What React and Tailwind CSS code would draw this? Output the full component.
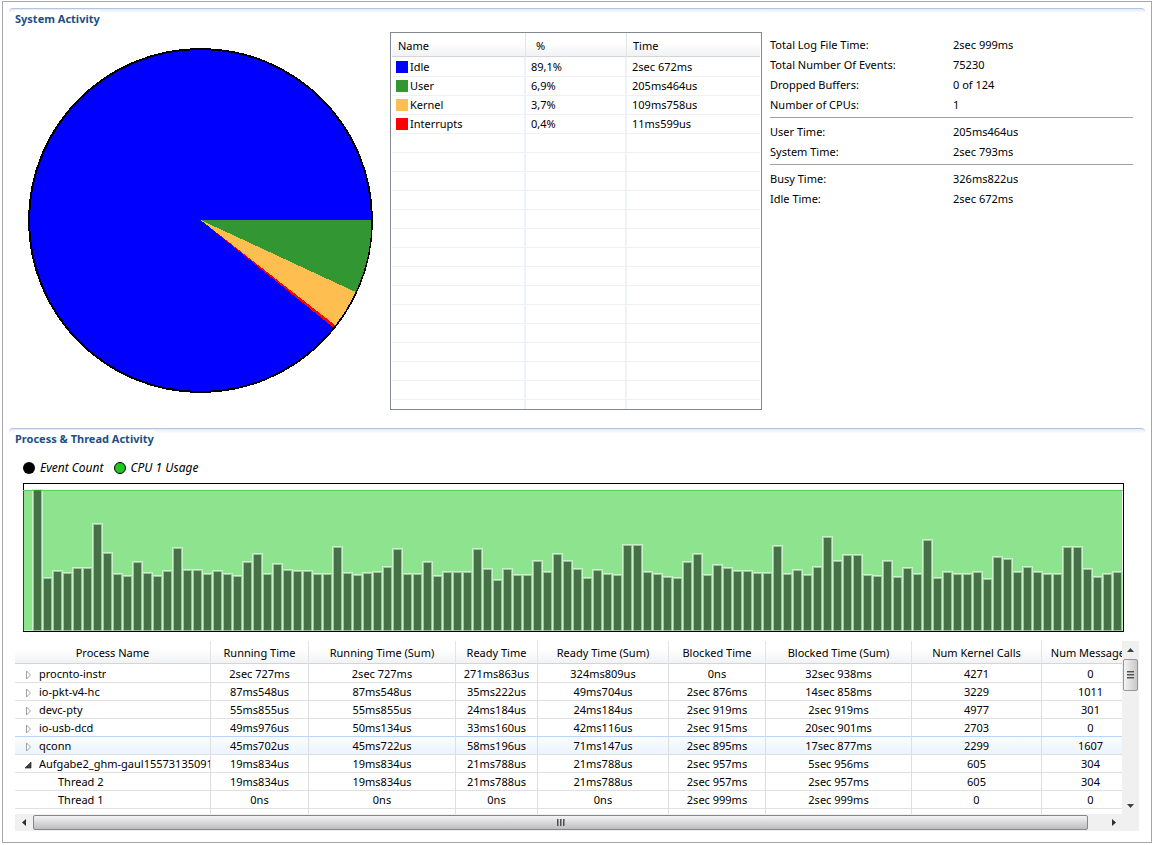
import React from "react";

const slices = [
  { name: "Idle", pct: "89,1%", time: "2sec 672ms", swatch: "bg-[#0000ff]" },
  { name: "User", pct: "6,9%", time: "205ms464us", swatch: "bg-[#329632]" },
  { name: "Kernel", pct: "3,7%", time: "109ms758us", swatch: "bg-[#ffbe50]" },
  { name: "Interrupts", pct: "0,4%", time: "11ms599us", swatch: "bg-[#ff0000]" },
];

const stats = [
  [
    ["Total Log File Time:", "2sec 999ms"],
    ["Total Number Of Events:", "75230"],
    ["Dropped Buffers:", "0 of 124"],
    ["Number of CPUs:", "1"],
  ],
  [
    ["User Time:", "205ms464us"],
    ["System Time:", "2sec 793ms"],
  ],
  [
    ["Busy Time:", "326ms822us"],
    ["Idle Time:", "2sec 672ms"],
  ],
];

const eventCounts = [
  142, 54, 61, 59, 64, 64, 108, 79, 58, 56, 70, 59, 56, 61, 84, 62, 62, 58, 61, 58, 56, 70, 78, 58, 68, 62, 61,
  61, 58, 58, 85, 59, 57, 59, 60, 65, 83, 58, 58, 70, 56, 60, 60, 60, 83, 63, 52, 63, 57, 57, 71, 60, 78, 71, 63, 54, 62,
  58, 57, 87, 87, 60, 58, 55, 54, 70, 78, 57, 67, 64, 61, 61, 59, 59, 86, 58, 62, 57, 65, 95, 71, 77, 77, 57, 56, 71, 55,
  64, 58, 92, 54, 60, 58, 58, 60, 53, 75, 73, 60, 65, 60, 58, 58, 85, 85, 63, 55, 58, 60,
];

const columns = [
  ["Process Name", "w-[196px]"],
  ["Running Time", "w-[98px]"],
  ["Running Time (Sum)", "w-[147px]"],
  ["Ready Time", "w-[82px]"],
  ["Ready Time (Sum)", "w-[131px]"],
  ["Blocked Time", "w-[97px]"],
  ["Blocked Time (Sum)", "w-[146px]"],
  ["Num Kernel Calls", "w-[130px]"],
  ["Num Messages", "w-[98px]"],
];

const processes = [
  { kind: "closed", cells: ["procnto-instr", "2sec 727ms", "2sec 727ms", "271ms863us", "324ms809us", "0ns", "32sec 938ms", "4271", "0"] },
  { kind: "closed", cells: ["io-pkt-v4-hc", "87ms548us", "87ms548us", "35ms222us", "49ms704us", "2sec 876ms", "14sec 858ms", "3229", "1011"] },
  { kind: "closed", cells: ["devc-pty", "55ms855us", "55ms855us", "24ms184us", "24ms184us", "2sec 919ms", "2sec 919ms", "4977", "301"] },
  { kind: "closed", cells: ["io-usb-dcd", "49ms976us", "50ms134us", "33ms160us", "42ms116us", "2sec 915ms", "20sec 901ms", "2703", "0"] },
  { kind: "closed", hot: true, cells: ["qconn", "45ms702us", "45ms722us", "58ms196us", "71ms147us", "2sec 895ms", "17sec 877ms", "2299", "1607"] },
  { kind: "open", cells: ["Aufgabe2_ghm-gaul15573135091", "19ms834us", "19ms834us", "21ms788us", "21ms788us", "2sec 957ms", "5sec 956ms", "605", "304"] },
  { kind: "leaf", cells: ["Thread 2", "19ms834us", "19ms834us", "21ms788us", "21ms788us", "2sec 957ms", "2sec 957ms", "605", "304"] },
  { kind: "leaf", cells: ["Thread 1", "0ns", "0ns", "0ns", "0ns", "2sec 999ms", "2sec 999ms", "0", "0"] },
  { kind: "closed", cells: ["io-usb", "1ms583us", "1ms583us", "0ns", "0ns", "2sec 997ms", "17sec 983ms", "38", "0"] },
];

function SectionTitle({ children }) {
  return (
    <div className="h-[22px] rounded-t-sm border-t border-[#b3c5de] bg-linear-to-b from-[#e3ebf5] to-white to-20% px-[6px]">
      <h2 className="mt-px inline-block bg-white align-top text-[11px] leading-[18px] font-bold text-[#1d4f84]">{children}</h2>
    </div>
  );
}

function point(deg, r) {
  const a = (deg * Math.PI) / 180;
  return `${(172.5 + r * Math.cos(a)).toFixed(2)} ${(172 + r * Math.sin(a)).toFixed(2)}`;
}

function wedge(from, to) {
  return `M172.5 172 L${point(from, 171)} A171 171 0 0 1 ${point(to, 171)} Z`;
}

function Pie() {
  return (
    <svg viewBox="0 0 345 345" className="ml-[19px] mt-[18px] size-[345px] shrink-0" shapeRendering="crispEdges" role="img" aria-label="System activity">
      <circle cx="172.5" cy="172.5" r="172.5" fill="#000" />
      <circle cx="172.5" cy="172.5" r="170.5" fill="#0000ff" />
      <path d={wedge(0, 24.9)} fill="#329632" />
      <path d={wedge(24.9, 38)} fill="#ffbe50" />
      <path d={wedge(38, 39)} fill="#ff0000" />
    </svg>
  );
}

function SummaryTable() {
  const rows = [...slices, ...Array.from({ length: 15 }, () => null)];
  const head = "border-b border-b-[#d5d5d5] bg-linear-to-b from-white from-40% to-[#f1f2f4] pt-[2px] pb-0 font-normal";
  const cell = "border-b border-b-[#f0f0f0] py-px pr-0 align-bottom";
  const line = "border-r-2 border-r-[#edf2f9]";
  return (
    <div className="h-[378px] w-[372px] shrink-0 overflow-hidden border border-[#828790] px-px">
      <table className="w-full table-fixed border-separate border-spacing-0 text-left leading-[16px]">
        <thead>
          <tr className="h-[24px]">
            <th className={`w-[134px] border-r border-r-[#e2e4e8] px-[6px] ${head}`}>Name</th>
            <th className={`w-[101px] border-r border-r-[#e2e4e8] px-[10px] ${head}`}>%</th>
            <th className={`px-[6px] ${head}`}>Time</th>
          </tr>
        </thead>
        <tbody>
          {rows.map((r, i) => (
            <tr key={i} className={i === 0 ? "h-[20px]" : "h-[19px]"}>
              <td className={`pl-[4px] ${cell} ${line}`}>
                {r && (
                  <span className="flex items-center gap-[2px]">
                    <span className={`size-[12px] ${r.swatch}`} />
                    {r.name}
                  </span>
                )}
              </td>
              <td className={`pl-[5px] ${cell} ${line}`}>{r && r.pct}</td>
              <td className={`pl-[5px] ${cell}`}>{r && r.time}</td>
            </tr>
          ))}
        </tbody>
      </table>
    </div>
  );
}

function Stats() {
  return (
    <div className="mr-[12px] flex-1 pt-[3px]">
      {stats.map((group, g) => (
        <dl key={g} className={`grid grid-cols-[183px_1fr] leading-[20px] ${g > 0 ? "mt-[2px] border-t border-[#a0a0a0] pt-[4px]" : ""}`}>
          {group.map(([label, value]) => (
            <React.Fragment key={label}>
              <dt>{label}</dt>
              <dd>{value}</dd>
            </React.Fragment>
          ))}
        </dl>
      ))}
    </div>
  );
}

function Chart() {
  return (
    <svg viewBox="0 0 1101 149" preserveAspectRatio="none" className="block h-[149px] w-full" shapeRendering="crispEdges" role="img" aria-label="Event count and CPU usage">
      <rect width="1101" height="149" fill="#000" />
      <rect x="1" y="1" width="1099" height="147" fill="#fff" />
      <rect x="0" y="7" width="1099" height="141" fill="#8ee48e" />
      <rect x="0" y="7" width="1" height="141" fill="#0f5a0f" />
      {eventCounts.map((h, i) => {
        const x = 9 + i * 10;
        const y = 148 - h;
        return (
          <g key={i}>
            <rect x={x} y={y} width="11" height={h} fill="#c8f2c8" />
            <rect x={x + 1} y={y + 1} width="9" height={h - 1} fill="#a0bea0" />
            <rect x={x + 2} y={y + 2} width="7" height={h - 3} fill="#467146" />
          </g>
        );
      })}
      <rect x="0" y="7" width="1100" height="1" fill="#55cf55" />
      <rect x="11" y="7" width="7" height="1" fill="#3c943c" />
      <rect x="1" y="147" width="8" height="1" fill="#c8f2c8" />
      <rect x="1100" y="0" width="1" height="149" fill="#000" />
    </svg>
  );
}

function Twisty({ kind }) {
  if (kind === "leaf") return <span className="w-[9px] shrink-0" />;
  return (
    <svg viewBox="0 0 9 10" className="mt-[4px] h-[10px] w-[9px] shrink-0">
      {kind === "closed" ? (
        <path d="M2.5 1 L6.5 5 L2.5 9 Z" fill="#fff" stroke="#a0a0a0" />
      ) : (
        <path d="M7 2 V8 H1 Z" fill="#404040" stroke="#262626" strokeWidth="0.7" />
      )}
    </svg>
  );
}

function ProcessTable() {
  return (
    <div className="h-[173px] min-w-0 flex-1 overflow-hidden">
      <table className="w-[1125px] table-fixed border-separate border-spacing-0 text-center leading-[16px]">
        <thead>
          <tr className="h-[23px]">
            {columns.map(([label, width]) => (
              <th key={label} className={`${width} border-r border-b border-r-[#e2e4e8] border-b-[#d5d5d5] bg-linear-to-b from-white from-40% to-[#f1f2f4] px-0 pt-[2px] pb-0 font-normal whitespace-nowrap`}>
                {label}
              </th>
            ))}
          </tr>
        </thead>
        <tbody>
          {processes.map((p, i) => (
            <tr key={i} className={`${i === 0 ? "h-[19px]" : "h-[18px]"} ${p.hot ? "bg-linear-to-b from-[#fafcff] to-[#ebf3fd]" : ""}`}>
              {p.cells.map((c, j) => (
                <td key={j} className={`overflow-hidden border-r border-b border-r-[#dedede] px-0 pt-px pb-0 align-bottom whitespace-nowrap ${processes[i + 1]?.hot ? "border-b-[#b8d6fb]" : "border-b-[#e0e0e0]"}`}>
                  {j === 0 ? (
                    <span className="flex gap-[6px] pl-[9px] text-left">
                      <Twisty kind={p.kind} />
                      <span className={`min-w-0 overflow-hidden ${p.kind === "leaf" ? "pl-[19px]" : ""}`}>{c}</span>
                    </span>
                  ) : (
                    c
                  )}
                </td>
              ))}
            </tr>
          ))}
        </tbody>
      </table>
    </div>
  );
}

function Grip({ vertical }) {
  const bar = vertical
    ? "h-[2px] w-[7px] border-t border-t-[#505050] bg-[#a0a0a0]"
    : "h-[7px] w-[2px] border-l border-l-[#505050] bg-[#909090]";
  return (
    <>
      <span className={bar} />
      <span className={bar} />
      <span className={bar} />
    </>
  );
}

export default function App() {
  return (
    <div className="bg-white pt-px pb-[2px] pl-[2px] font-['Noto_Sans',sans-serif] text-[11px] text-black">
      <main className="border border-[#a7a6aa] px-[6px] pt-[6px] pb-[11px]">
        <section className="h-[420px]">
          <SectionTitle>System Activity</SectionTitle>
          <div className="flex">
            <Pie />
            <div className="ml-[17px] mt-[2px] flex min-w-0 flex-1 gap-[8px]">
              <SummaryTable />
              <Stats />
            </div>
          </div>
        </section>
        <section>
          <SectionTitle>Process &amp; Thread Activity</SectionTitle>
          <div className="mr-[21px] ml-[14px]">
            <div className="flex h-[33px] items-center gap-[10px] pt-[2px] text-[12px] italic">
              <span className="flex items-center gap-[5px]">
                <span className="size-[12px] rounded-full bg-black" />
                Event Count
              </span>
              <span className="flex items-center gap-[5px]">
                <span className="size-[12px] rounded-full border border-black bg-[#1ec81e]" />
                CPU 1 Usage
              </span>
            </div>
            <Chart />
          </div>
          <div className="mr-[6px] ml-[6px] mt-[9px] flex">
            <ProcessTable />
            <div className="flex h-[173px] w-[17px] shrink-0 flex-col bg-[#f0f0f0]">
              <button type="button" aria-label="Scroll up" className="flex h-[18px] items-center justify-center">
                <svg viewBox="0 0 7 4" className="h-[4px] w-[7px]"><path d="M0 4 L3.5 0 L7 4 Z" fill="#404040" /></svg>
              </button>
              <button type="button" aria-label="Vertical scroll thumb" className="mx-px flex h-[32px] flex-col items-center justify-center gap-px rounded-xs border border-[#979797] bg-linear-to-r from-[#f4f4f4] to-[#c8c8ca]">
                <Grip vertical />
              </button>
              <span className="flex-1" />
              <button type="button" aria-label="Scroll down" className="flex h-[17px] items-center justify-center">
                <svg viewBox="0 0 7 4" className="h-[4px] w-[7px]"><path d="M0 0 L3.5 4 L7 0 Z" fill="#404040" /></svg>
              </button>
            </div>
          </div>
          <div className="mr-[6px] ml-[6px] flex h-[17px] bg-[#f0f0f0] pr-[17px]">
            <button type="button" aria-label="Scroll left" className="flex w-[18px] items-center justify-center">
              <svg viewBox="0 0 4 7" className="h-[7px] w-[4px]"><path d="M4 0 L0 3.5 L4 7 Z" fill="#303030" /></svg>
            </button>
            <button type="button" aria-label="Horizontal scroll thumb" className="mt-px flex h-[15px] flex-1 items-center justify-center gap-px rounded-xs border border-[#868686] bg-linear-to-b from-[#f4f4f4] to-[#bdbdc0]">
              <Grip />
            </button>
            <span className="w-[17px]" />
            <button type="button" aria-label="Scroll right" className="flex w-[17px] items-center justify-center">
              <svg viewBox="0 0 4 7" className="h-[7px] w-[4px]"><path d="M0 0 L4 3.5 L0 7 Z" fill="#303030" /></svg>
            </button>
          </div>
        </section>
      </main>
    </div>
  );
}
